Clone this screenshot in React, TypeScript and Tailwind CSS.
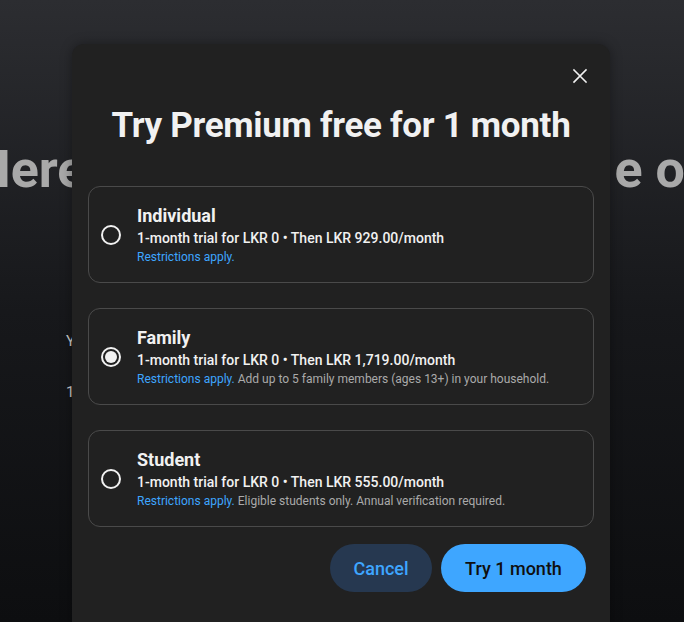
import { useState } from "react";

const plans = [
  {
    id: "individual",
    name: "Individual",
    price: "1-month trial for LKR 0 • Then LKR 929.00/month",
    note: "",
  },
  {
    id: "family",
    name: "Family",
    price: "1-month trial for LKR 0 • Then LKR 1,719.00/month",
    note: "Add up to 5 family members (ages 13+) in your household.",
  },
  {
    id: "student",
    name: "Student",
    price: "1-month trial for LKR 0 • Then LKR 555.00/month",
    note: "Eligible students only. Annual verification required.",
  },
];

function Radio({ checked }: { checked: boolean }) {
  return (
    <div className="w-5 h-5 shrink-0 rounded-full border-2 border-[#f1f1f1] flex items-center justify-center">
      {checked && <div className="w-3 h-3 rounded-full bg-[#f1f1f1]" />}
    </div>
  );
}

export default function App() {
  const [selected, setSelected] = useState("family");

  return (
    <div
      className="relative w-[684px] h-[622px] overflow-hidden bg-gradient-to-b from-[#2c2d31] via-[#17181b] to-[#0d0e10]"
      style={{ fontFamily: "Roboto, 'Liberation Sans', sans-serif" }}
    >
      {/* page behind the dialog */}
      <div className="pt-[140px]">
        <div className="flex justify-between whitespace-nowrap text-[52px] font-bold leading-[60px] text-[#a9a9a9]">
          <span className="-ml-[26px]">Here</span>
          <span className="-mr-[30px]">e on</span>
        </div>
        <div className="mt-[130px] ml-[66px] text-[15px] text-[#c8c8c8]">Y</div>
        <div className="mt-[28px] ml-[66px] text-[15px] text-[#c8c8c8]">1</div>
      </div>

      {/* dialog */}
      <div className="absolute left-[72px] top-[44px] w-[538px] h-[600px] rounded-xl bg-[#212121] shadow-[0_0_12px_rgba(0,0,0,0.35)] px-4 pt-3">
        <div className="flex justify-end">
          <button className="w-10 h-10 -mr-[6px] flex items-center justify-center text-[#f1f1f1]">
            <svg width="24" height="24" viewBox="0 0 24 24" fill="none">
              <path
                d="M6 6l12 12M18 6L6 18"
                stroke="currentColor"
                strokeWidth="1.6"
                strokeLinecap="square"
              />
            </svg>
          </button>
        </div>
        <h1 className="mt-[10px] text-center text-[35px] leading-10 font-bold tracking-[-0.3px] text-[#f1f1f1]">
          Try Premium free for 1 month
        </h1>

        <div className="mt-10 flex flex-col gap-[25px]">
          {plans.map((p) => (
            <div
              key={p.id}
              onClick={() => setSelected(p.id)}
              className="flex items-center gap-4 h-[97px] px-3 rounded-xl border border-[#4a4a4a] cursor-pointer"
            >
              <Radio checked={selected === p.id} />
              <div className="flex flex-col">
                <div className="text-lg leading-6 font-bold text-[#f1f1f1]">{p.name}</div>
                <div className="text-sm leading-5 font-medium text-[#f1f1f1]">{p.price}</div>
                <div className="mt-px text-xs leading-4 text-[#aaaaaa]">
                  <span className="text-[#3ea6ff]">Restrictions apply.</span>
                  {p.note && " " + p.note}
                </div>
              </div>
            </div>
          ))}
        </div>

        <div className="mt-[17px] mr-2 flex justify-end gap-[9px]">
          <button className="h-12 w-[102px] rounded-full bg-[#263850] text-[18px] font-medium text-[#3ea6ff]">
            Cancel
          </button>
          <button className="h-12 w-[145px] rounded-full bg-[#3ea6ff] text-[18px] font-medium text-[#0f0f0f]">
            Try 1 month
          </button>
        </div>
      </div>
    </div>
  );
}
